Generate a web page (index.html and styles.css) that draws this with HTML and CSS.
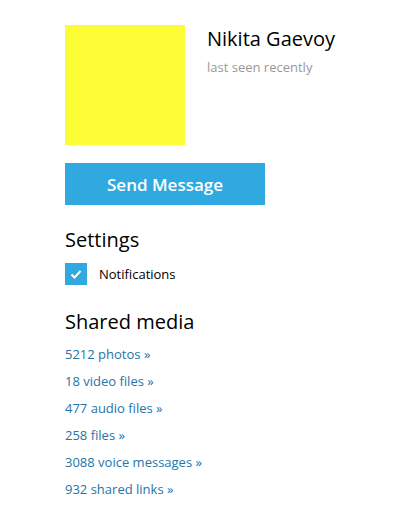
FILE: index.html
```html
<!DOCTYPE html>
<html lang="en">
<head>
  <meta charset="UTF-8">
  <title>Nikita Gaevoy</title>
  <link rel="stylesheet" href="styles.css">
</head>
<body>

  <div class="profile">
    <div class="head">
      <div class="avatar"></div>
      <div class="info">
        <div class="name">Nikita Gaevoy</div>
        <div class="status">last seen recently</div>
      </div>
    </div>

    <button class="send">Send Message</button>

    <h3>Settings</h3>
    <label class="check">
      <span class="box">
        <svg width="14" height="14" viewBox="0 0 14 14"><path d="M2.5 7.5 L5.5 10.5 L11.5 4" fill="none" stroke="#fff" stroke-width="2"/></svg>
      </span>
      Notifications
    </label>

    <h3 class="media-title">Shared media</h3>
    <ul class="media">
      <li><a href="#">5212 photos &raquo;</a></li>
      <li><a href="#">18 video files &raquo;</a></li>
      <li><a href="#">477 audio files &raquo;</a></li>
      <li><a href="#">258 files &raquo;</a></li>
      <li><a href="#">3088 voice messages &raquo;</a></li>
      <li><a href="#">932 shared links &raquo;</a></li>
    </ul>
  </div>

</body>
</html>
```

FILE: styles.css
```css
body { margin: 0; background: #fff; font-family: "Open Sans", sans-serif; color: #000; }
.profile { padding: 25px 0 0 65px; }
.head { display: flex; gap: 22px; }
.avatar { width: 120px; height: 120px; background: #fdfd37; }
.info { padding-top: 1px; }
.name { font-size: 20px; line-height: 26px; }
.status { font-size: 13px; color: #999; margin-top: 6px; }
.send { display: block; margin-top: 18px; width: 200px; height: 42px; border: none; background: #2fa9e0; color: #fff; font-family: "Open Sans", sans-serif; font-size: 17px; font-weight: 600; cursor: pointer; }
h3 { font-size: 20px; font-weight: normal; margin: 22px 0 8px; line-height: 26px; }
.media-title { margin: 24px 0 6px; }
.check { display: flex; align-items: center; gap: 12px; font-size: 13px; margin-top: 10px; }
.box { width: 22px; height: 22px; background: #2fa9e0; display: flex; align-items: center; justify-content: center; }
.media { list-style: none; margin: 0; padding: 0; }
.media li { height: 27px; line-height: 27px; font-size: 13px; }
.media a { color: #2574a9; text-decoration: none; }
```
